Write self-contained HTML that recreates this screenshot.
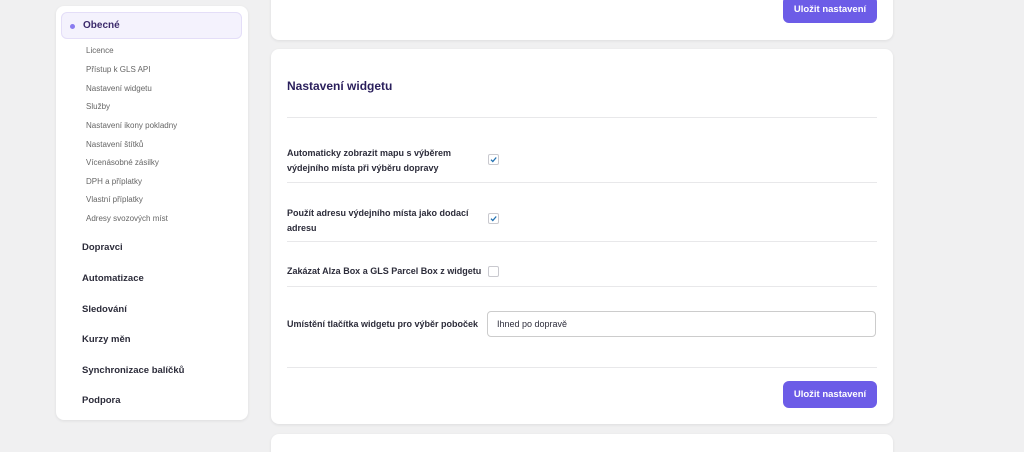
<!DOCTYPE html>
<html style="height:452px;overflow:hidden"><head><meta charset="utf-8"><style>
body{margin:0;width:1024px;height:452px;background:#f0f0f1;font-family:"Liberation Sans",sans-serif;position:relative;overflow:hidden}
.card{position:absolute;background:#fff;border-radius:8px;box-shadow:0 1px 3px rgba(0,0,0,.08)}
.side{left:56px;top:6px;width:192px;height:414px}
.act{position:absolute;left:5px;top:6px;width:181px;height:27px;background:#f4f2fd;border:1px solid #e4def8;border-radius:6px;box-sizing:border-box}
.act span{position:absolute;left:21px;top:7px;font-size:10px;font-weight:bold;color:#3b2a6b}
.act i{position:absolute;left:8px;top:11px;width:5px;height:5px;border-radius:50%;background:#8a7cf0}
.sub{position:absolute;left:30px;font-size:8px;color:#666}
.main{position:absolute;left:26px;font-size:9.5px;font-weight:bold;color:#2c2c3a}
.btn{position:absolute;background:#6c5ce7;color:#fff;font-size:9.5px;font-weight:bold;border-radius:6px;width:94px;height:27px;line-height:27px;text-align:center}
.lbl{position:absolute;left:287px;font-size:9px;font-weight:bold;color:#2c2c3a;line-height:15px}
.hr{position:absolute;left:287px;width:590px;height:1px;background:#e8e8ea}
.cb{position:absolute;left:488px;width:9px;height:9px;border:1px solid #c9c9cf;border-radius:2px;background:#fff}
.cb svg{position:absolute;left:0;top:0}
</style></head><body>
<div class="card side">
<div class="act"><i></i><span>Obecné</span></div>
<div class="sub" style="top:40px">Licence</div>
<div class="sub" style="top:59px">Přístup k GLS API</div>
<div class="sub" style="top:78px">Nastavení widgetu</div>
<div class="sub" style="top:96px">Služby</div>
<div class="sub" style="top:115px">Nastavení ikony pokladny</div>
<div class="sub" style="top:134px">Nastavení štítků</div>
<div class="sub" style="top:152px">Vícenásobné zásilky</div>
<div class="sub" style="top:171px">DPH a příplatky</div>
<div class="sub" style="top:189px">Vlastní příplatky</div>
<div class="sub" style="top:208px">Adresy svozových míst</div>
<div class="main" style="top:236px">Dopravci</div>
<div class="main" style="top:267px">Automatizace</div>
<div class="main" style="top:298px">Sledování</div>
<div class="main" style="top:328px">Kurzy měn</div>
<div class="main" style="top:359px">Synchronizace balíčků</div>
<div class="main" style="top:389px">Podpora</div>
</div>
<div class="card" style="left:271px;top:-10px;width:622px;height:50px"></div>
<div class="btn" style="left:783px;top:-4px">Uložit nastavení</div>
<div class="card" style="left:271px;top:49px;width:622px;height:375px"></div>
<div style="position:absolute;left:287px;top:79px;font-size:12px;font-weight:bold;color:#2a1f5c">Nastavení widgetu</div>
<div class="hr" style="top:117px"></div>
<div class="lbl" style="top:146px">Automaticky zobrazit mapu s výběrem<br>výdejního místa při výběru dopravy</div>
<div class="cb" style="top:154px"><svg width="9" height="9"><path d="M2 4.7L3.8 6.5L7.2 2.5" stroke="#2271b1" stroke-width="1.3" fill="none"/></svg></div>
<div class="hr" style="top:182px"></div>
<div class="lbl" style="top:206px">Použít adresu výdejního místa jako dodací<br>adresu</div>
<div class="cb" style="top:213px"><svg width="9" height="9"><path d="M2 4.7L3.8 6.5L7.2 2.5" stroke="#2271b1" stroke-width="1.3" fill="none"/></svg></div>
<div class="hr" style="top:241px"></div>
<div class="lbl" style="top:264px">Zakázat Alza Box a GLS Parcel Box z widgetu</div>
<div class="cb" style="top:266px"></div>
<div class="hr" style="top:286px"></div>
<div class="lbl" style="top:317px">Umístění tlačítka widgetu pro výběr poboček</div>
<div style="position:absolute;left:487px;top:311px;width:389px;height:26px;border:1px solid #ccc;border-radius:4px;box-sizing:border-box;font-size:9px;color:#2c2c3a;padding:7px 0 0 9px">Ihned po dopravě</div>
<div class="hr" style="top:367px"></div>
<div class="btn" style="left:783px;top:381px">Uložit nastavení</div>
<div class="card" style="left:271px;top:434px;width:622px;height:30px"></div>
</body></html>
